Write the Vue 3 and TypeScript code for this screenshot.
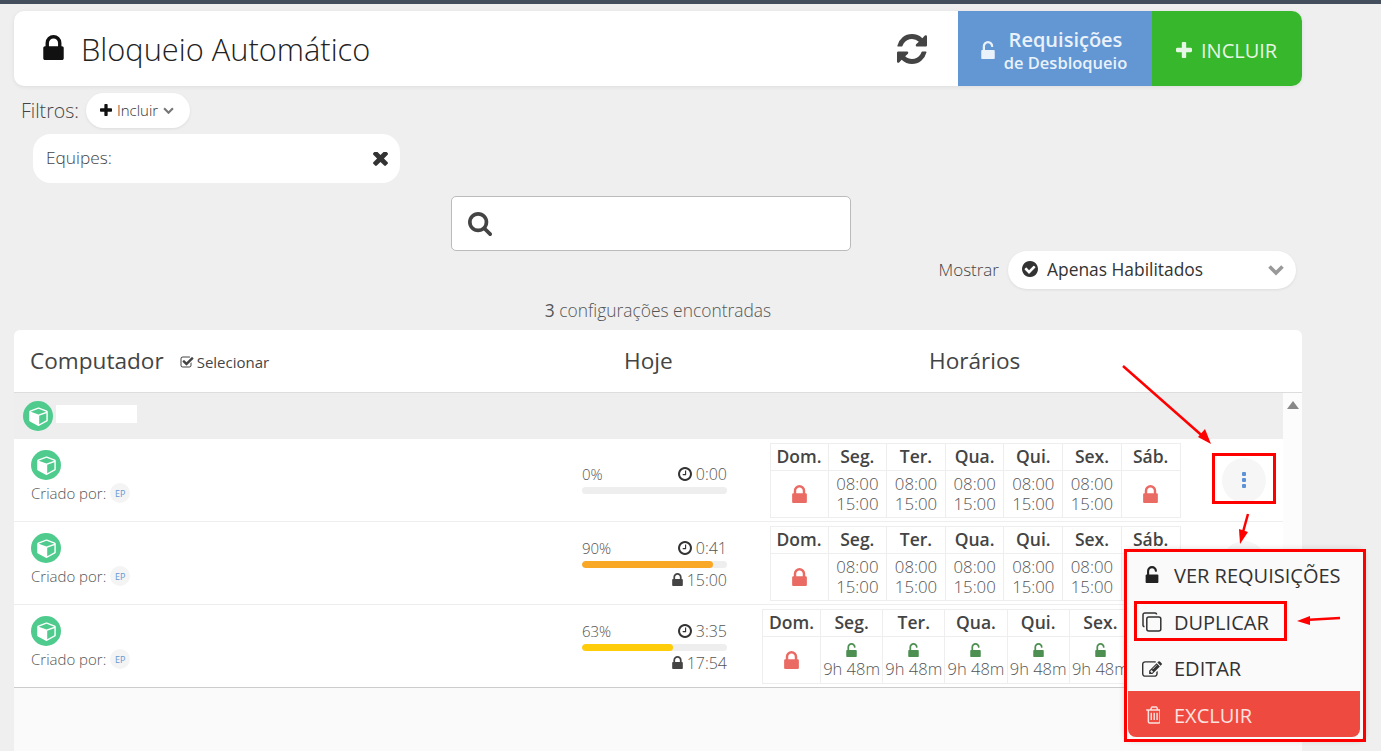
<script setup lang="ts">
interface Cell {
  lock?: boolean
  open?: string
  from?: string
  to?: string
}
interface Row {
  pct: number
  color: string
  clock: string
  until?: string
  wide?: boolean
  cells: Cell[]
}

const days = ['Dom.', 'Seg.', 'Ter.', 'Qua.', 'Qui.', 'Sex.', 'Sáb.']
const work: Cell = { from: '08:00', to: '15:00' }
const open: Cell = { open: '9h 48m' }
const lock: Cell = { lock: true }

const rows: Row[] = [
  { pct: 0, color: '#eee', clock: '0:00', cells: [lock, work, work, work, work, work, lock] },
  { pct: 90, color: '#f9a825', clock: '0:41', until: '15:00', cells: [lock, work, work, work, work, work, lock] },
  { pct: 63, color: '#ffcc0a', clock: '3:35', until: '17:54', wide: true, cells: [lock, open, open, open, open, open, lock] },
]

const lockPath = 'M320 768h512v-192q0-106-75-181t-181-75-181 75-75 181v192zm832 96v576q0 40-28 68t-68 28h-960q-40 0-68-28t-28-68v-576q0-40 28-68t68-28h32v-192q0-184 132-316t316-132 316 132 132 316v192h32q40 0 68 28t28 68z'
const unlockPath = 'M1056 768q40 0 68 28t28 68v576q0 40-28 68t-68 28h-960q-40 0-68-28t-28-68v-576q0-40 28-68t68-28h32v-320q0-185 131.500-316.500t316.500-131.500 316.500 131.500 131.500 316.500q0 26-19 45t-45 19h-64q-26 0-45-19t-19-45q0-106-75-181t-181-75-181 75-75 181v320h736z'
const plusPath = 'M1408 736v192q0 40-28 68t-68 28h-416v416q0 40-28 68t-68 28h-192q-40 0-68-28t-28-68v-416h-416q-40 0-68-28t-28-68v-192q0-40 28-68t68-28h416v-416q0-40 28-68t68-28h192q40 0 68 28t28 68v416h416q40 0 68 28t28 68z'
const cubePath = 'M896 1629l640-349v-636l-640 233v752zm-64-865l698-254-698-254-698 254zm832-252v768q0 35-18 65t-49 47l-704 384q-28 16-61 16t-61-16l-704-384q-31-17-49-47t-18-65v-768q0-40 23-73t61-47l704-256q22-8 44-8t44 8l704 256q38 14 61 47t23 73z'
</script>

<template>
  <div class="page">
    <div class="topbar"></div>

    <header class="title-card">
      <svg class="title-lock" viewBox="0 128 1152 1408"><path :d="lockPath" /></svg>
      <h1>Bloqueio Automático</h1>
      <svg class="refresh" viewBox="0 0 1536 1536">
        <path d="M1511 928q0 5-1 7-64 268-268 434.500T764 1536q-146 0-282.500-55T238 1324l-129 129q-19 19-45 19t-45-19-19-45V960q0-26 19-45t45-19h448q26 0 45 19t19 45-19 45l-137 137q71 66 161 102t187 36q134 0 250-65t186-179q11-17 53-117 8-23 30-23h192q13 0 22.500 9.500T1511 928zm25-800v448q0 26-19 45t-45 19h-448q-26 0-45-19t-19-45 19-45l138-138Q969 256 768 256q-134 0-250 65T332 500q-11 17-53 117-8 23-30 23H50q-13 0-22.500-9.500T18 608v-7q65-268 270-434.500T768 0q146 0 284 55.500T1297 212l130-129q19-19 45-19t45 19 19 45z" />
      </svg>
      <button class="btn-req">
        <svg class="btn-lock" viewBox="0 0 1152 1536"><path :d="unlockPath" /></svg>
        <span class="req-text"><b>Requisições</b><small>de Desbloqueio</small></span>
      </button>
      <button class="btn-add">
        <svg class="plus" viewBox="0 128 1408 1408"><path :d="plusPath" /></svg>
        INCLUIR
      </button>
    </header>

    <div class="filters">
      <span class="filters-label">Filtros:</span>
      <button class="chip">
        <svg class="chip-plus" viewBox="0 128 1408 1408"><path :d="plusPath" /></svg>
        Incluir
        <svg class="chip-arrow" viewBox="0 0 10 6"><path d="M1 1l4 4 4-4" /></svg>
      </button>
    </div>

    <div class="team-pill">
      <span>Equipes:</span>
      <svg class="close" viewBox="110 346 1188 1100">
        <path d="M1298 1214q0 40-28 68l-136 136q-28 28-68 28t-68-28l-294-294-294 294q-28 28-68 28t-68-28l-136-136q-28-28-28-68t28-68l294-294-294-294q-28-28-28-68t28-68l136-136q28-28 68-28t68 28l294 294 294-294q28-28 68-28t68 28l136 136q28 28 28 68t-28 68l-294 294 294 294q28 28 28 68z" />
      </svg>
    </div>

    <div class="search">
      <svg viewBox="64 128 1664 1664">
        <path d="M1216 832q0-185-131.500-316.500t-316.500-131.500-316.500 131.500-131.500 316.500 131.500 316.500 316.500 131.500 316.500-131.500 131.500-316.500zm512 832q0 52-38 90t-90 38q-54 0-90-38l-343-342q-179 124-399 124-143 0-273.500-55.500t-225-150-150-225-55.500-273.500 55.500-273.500 150-225 225-150 273.500-55.500 273.500 55.500 225 150 150 225 55.500 273.500q0 220-124 399l343 343q37 37 37 90z" />
      </svg>
    </div>

    <div class="show-row">
      <span class="show-label">Mostrar</span>
      <div class="show-select">
        <svg class="check" viewBox="0 128 1536 1536">
          <path d="M1284 734q0-28-18-46l-91-90q-19-19-45-19t-45 19l-408 407-226-226q-19-19-45-19t-45 19l-91 90q-18 18-18 46 0 27 18 45l362 362q19 19 45 19 27 0 46-19l543-543q18-18 18-45zm252 162q0 209-103 385.500t-279.500 279.500-385.500 103-385.500-103-279.500-279.500-103-385.500 103-385.500 279.500-279.500 385.500-103 385.500 103 279.500 279.500 103 385.500z" />
        </svg>
        <span>Apenas Habilitados</span>
        <svg class="show-arrow" viewBox="0 0 18 12"><path d="M2.500 2.500L9 9l6.500-6.500" /></svg>
      </div>
    </div>

    <p class="count"><b>3</b> configurações encontradas</p>

    <section class="table-card">
      <div class="table-head">
        <div class="head-name">
          <span class="head-title">Computador</span>
          <span class="select">
            <svg viewBox="0 128 1792 1408">
              <path d="M1472 930v318q0 119-84.500 203.500t-203.500 84.500h-832q-119 0-203.500-84.500t-84.500-203.500v-832q0-119 84.500-203.500t203.500-84.500h832q63 0 117 25 15 7 18 23 3 17-9 29l-49 49q-10 10-23 10-3 0-9-2-23-6-45-6h-832q-66 0-113 47t-47 113v832q0 66 47 113t113 47h832q66 0 113-47t47-113v-254q0-13 9-22l64-64q10-10 23-10 6 0 12 3 20 8 20 29zm231-489l-814 814q-24 24-57 24t-57-24l-430-430q-24-24-24-57t24-57l110-110q24-24 57-24t57 24l263 263 647-647q24-24 57-24t57 24l110 110q24 24 24 57t-24 57z" />
            </svg>
            Selecionar
          </span>
        </div>
        <span class="head-title head-today">Hoje</span>
        <span class="head-title head-hours">Horários</span>
      </div>

      <div class="table-body">
        <div class="rows">
          <div class="group">
            <span class="cube">
              <svg viewBox="0 0 1664 1792"><path :d="cubePath" /></svg>
            </span>
            <span class="masked"></span>
          </div>

          <div v-for="(row, r) in rows" :key="r" class="row">
            <div class="who">
              <span class="cube">
                <svg viewBox="0 0 1664 1792"><path :d="cubePath" /></svg>
              </span>
              <div class="creator">Criado por: <span class="initials">EP</span></div>
            </div>

            <div class="today">
              <div class="today-line">
                <span class="pct">{{ row.pct }}%</span>
                <span class="time">
                  <svg class="clock" viewBox="0 128 1536 1536">
                    <path d="M896 544v448q0 14-9 23t-23 9h-320q-14 0-23-9t-9-23v-64q0-14 9-23t23-9h224v-352q0-14 9-23t23-9h64q14 0 23 9t9 23zm416 352q0-148-73-273t-198-198-273-73-273 73-198 198-73 273 73 273 198 198 273 73 273-73 198-198 73-273zm224 0q0 209-103 385.500t-279.500 279.500-385.500 103-385.500-103-279.500-279.500-103-385.500 103-385.500 279.500-279.500 385.500-103 385.500 103 279.500 279.500 103 385.500z" />
                  </svg>
                  {{ row.clock }}
                </span>
              </div>
              <div class="bar">
                <div class="bar-fill" :style="{ width: row.pct + '%', background: row.color }"></div>
              </div>
              <div v-if="row.until" class="until">
                <svg viewBox="0 128 1152 1408"><path :d="lockPath" /></svg>
                {{ row.until }}
              </div>
            </div>

            <div class="hours">
              <table class="days" :class="{ wide: row.wide }">
                <tbody>
                  <tr>
                    <th v-for="day in days" :key="day">{{ day }}</th>
                  </tr>
                  <tr>
                    <td v-for="(cell, c) in row.cells" :key="c">
                      <svg v-if="cell.lock" class="cell-lock" viewBox="0 128 1152 1408"><path :d="lockPath" /></svg>
                      <template v-else-if="cell.open">
                        <svg class="cell-open" viewBox="0 0 1152 1536"><path :d="unlockPath" /></svg>
                        <div class="open-time">{{ cell.open }}</div>
                      </template>
                      <template v-else>{{ cell.from }}<br />{{ cell.to }}</template>
                    </td>
                  </tr>
                </tbody>
              </table>
            </div>

            <div class="action">
              <button class="dots"><i></i><i></i><i></i></button>
            </div>
          </div>
        </div>

        <div class="scroller">
          <svg viewBox="0 0 14 10"><path d="M7 1l6 8H1z" /></svg>
        </div>
      </div>
      <div class="table-foot"></div>
    </section>

    <!-- menu aberto -->
    <div class="menu">
      <div class="menu-item">
        <span class="menu-icon"><svg class="icon-unlock" viewBox="0 0 1152 1536"><path :d="unlockPath" /></svg></span>
        VER REQUISIÇÕES
      </div>
      <div class="menu-item">
        <span class="menu-icon">
          <svg class="icon-copy" viewBox="0 0 20 20">
            <rect x="4.800" y="5" width="14" height="14" rx="2" />
            <path d="M2.500 14.500h-.2a1.300 1.300 0 0 1-1.300-1.300V2.800a1.800 1.800 0 0 1 1.800-1.800h10.400a1.300 1.300 0 0 1 1.300 1.300v.2" />
          </svg>
        </span>
        DUPLICAR
      </div>
      <div class="menu-item">
        <span class="menu-icon">
          <svg class="icon-edit" viewBox="0 128 1792 1408">
            <path d="M888 1184l116-116-152-152-116 116v56h96v96h56zm440-720q-16-16-33 1l-350 350q-17 17-1 33t33-1l350-350q17-17 1-33zm80 594v190q0 119-84.500 203.500t-203.500 84.500h-832q-119 0-203.500-84.500t-84.500-203.500v-832q0-119 84.500-203.500t203.500-84.500h832q63 0 117 25 15 7 18 23 3 17-9 29l-49 49q-14 14-32 8-23-6-45-6h-832q-66 0-113 47t-47 113v832q0 66 47 113t113 47h832q66 0 113-47t47-113v-126q0-13 9-22l64-64q15-15 35-7t20 29zm-96-738l288 288-672 672h-288v-288zm444 132l-92 92-288-288 92-92q28-28 68-28t68 28l152 152q28 28 28 68t-28 68z" />
          </svg>
        </span>
        EDITAR
      </div>
      <div class="menu-item danger">
        <span class="menu-icon">
          <svg class="icon-trash" viewBox="0 128 1408 1536">
            <path d="M704 736v576q0 14-9 23t-23 9h-64q-14 0-23-9t-9-23v-576q0-14 9-23t23-9h64q14 0 23 9t9 23zm256 0v576q0 14-9 23t-23 9h-64q-14 0-23-9t-9-23v-576q0-14 9-23t23-9h64q14 0 23 9t9 23zm256 0v576q0 14-9 23t-23 9h-64q-14 0-23-9t-9-23v-576q0-14 9-23t23-9h64q14 0 23 9t9 23zm128 724v-948h-896v948q0 22 7 40.500t14.500 27 10.500 8.500h832q3 0 10.500-8.500t14.500-27 7-40.500zm-672-1076h448l-48-117q-7-9-17-11h-317q-10 2-17 11zm928 32v64q0 14-9 23t-23 9h-96v948q0 83-47 143.500t-113 60.500h-832q-66 0-113-58.500t-47-141.500v-952h-96q-14 0-23-9t-9-23v-64q0-14 9-23t23-9h309l70-167q15-37 54-63t79-26h320q40 0 79 26t54 63l70 167h309q14 0 23 9t9 23z" />
          </svg>
        </span>
        EXCLUIR
      </div>
    </div>

    <!-- marcacoes vermelhas do print -->
    <div class="mark mark-dots"></div>
    <div class="mark mark-menu"></div>
    <div class="mark mark-dup"></div>
    <svg class="arrows" viewBox="0 0 1381 751">
      <path d="M1123 366L1207 440" />
      <path class="head" d="M1211 444L1198 437L1205 429Z" />
      <path d="M1248 514L1243 532" />
      <path class="head" d="M1240 544L1239 529L1248 532Z" />
      <path d="M1340 618L1305 620" />
      <path class="head" d="M1297 621L1310 616L1310 625Z" />
    </svg>
  </div>
</template>

<style>
html,
body {
  margin: 0;
  background: #efefef;
}
</style>

<style scoped>
.page {
  position: relative;
  width: 1381px;
  height: 751px;
  overflow: hidden;
  background: #efefef;
  font-family: "Open Sans", "Liberation Sans", sans-serif;
  color: #444;
}

button {
  font-family: inherit;
  border: none;
  cursor: pointer;
}

.topbar {
  height: 4px;
  background: #434f5c;
}

.title-card {
  display: flex;
  align-items: center;
  width: 1288px;
  height: 75px;
  margin: 7px 0 0 14px;
  background: #fff;
  border-radius: 10px;
  box-shadow: 0 1px 4px rgba(0, 0, 0, 0.08);
  overflow: hidden;
}

.title-lock {
  width: 21px;
  height: 25px;
  margin: -2px 0 0 29px;
  fill: #111;
}

h1 {
  flex: 1;
  margin: 0 0 0 17px;
  font-size: 30.800px;
  font-weight: 300;
  color: #222;
}

.refresh {
  width: 30px;
  height: 30px;
  margin-right: 31px;
  fill: #444;
}

.btn-req {
  display: flex;
  align-items: center;
  justify-content: center;
  gap: 9px;
  width: 194px;
  height: 100%;
  padding: 0 2px 0 0;
  background: #6397d3;
  color: #e9f1fa;
}

.btn-lock {
  width: 14px;
  height: 18px;
  margin-top: 2px;
  fill: #e9f1fa;
}

.req-text {
  display: flex;
  flex-direction: column;
  align-items: center;
  padding-top: 2px;
}

.req-text b {
  font-size: 20px;
  font-weight: 600;
  line-height: 26px;
}

.req-text small {
  font-size: 16.500px;
  font-weight: 600;
  line-height: 20px;
}

.btn-add {
  display: flex;
  align-items: center;
  gap: 9px;
  width: 150px;
  height: 100%;
  padding: 3px 0 0 24px;
  background: #37b72b;
  color: #e6f6e4;
  font-size: 20px;
}

.plus {
  width: 16px;
  height: 16px;
  fill: #e6f6e4;
}

.filters {
  display: flex;
  align-items: center;
  gap: 7px;
  height: 35px;
  margin: 7px 0 0 21px;
}

.filters-label {
  font-size: 19.500px;
  font-weight: 300;
}

.chip {
  display: flex;
  align-items: center;
  gap: 5px;
  width: 104px;
  height: 35px;
  padding: 0 0 1px 14px;
  background: #fff;
  border-radius: 18px;
  font-size: 15px;
  font-weight: 300;
  color: #333;
  box-shadow: 0 1px 3px rgba(0, 0, 0, 0.08);
}

.chip-plus {
  width: 12px;
  height: 12px;
  fill: #111;
}

.chip-arrow {
  width: 11px;
  height: 7px;
  fill: none;
  stroke: #777;
  stroke-width: 2;
}

.team-pill {
  display: flex;
  align-items: center;
  justify-content: space-between;
  box-sizing: border-box;
  width: 367px;
  height: 49px;
  margin: 6px 0 0 33px;
  padding: 0 12px 2px 13px;
  background: #fff;
  border-radius: 18px;
  font-size: 17.300px;
  font-weight: 300;
}

.close {
  width: 15px;
  height: 14px;
  margin-top: 2px;
  fill: #333;
}

.search {
  display: flex;
  align-items: center;
  box-sizing: border-box;
  width: 400px;
  height: 55px;
  margin: 13px 0 0 451px;
  padding-left: 16px;
  background: #fff;
  border: 1px solid #bbb;
  border-radius: 5px;
}

.search svg {
  width: 24px;
  height: 24px;
  fill: #444;
}

.show-row {
  display: flex;
  align-items: center;
  justify-content: flex-end;
  gap: 9px;
  width: 1296px;
  height: 38px;
}

.show-label {
  padding-bottom: 2px;
  font-size: 17px;
  font-weight: 300;
}

.show-select {
  display: flex;
  align-items: center;
  box-sizing: border-box;
  width: 288px;
  height: 38px;
  padding: 0 11px 2px 14px;
  background: #fff;
  border-radius: 19px;
  font-size: 17.400px;
  color: #333;
  box-shadow: 0 1px 3px rgba(0, 0, 0, 0.08);
}

.check {
  width: 16px;
  height: 16px;
  margin-right: 9px;
  fill: #333;
}

.show-arrow {
  width: 18px;
  height: 12px;
  margin: 2px 0 0 auto;
  fill: none;
  stroke: #999;
  stroke-width: 3.600;
}

.count {
  width: 1316px;
  margin: 10px 0 0;
  font-size: 17.400px;
  font-weight: 300;
  line-height: 22px;
  text-align: center;
  color: #555;
}

.count b {
  font-weight: 400;
}

.table-card {
  width: 1288px;
  height: 421px;
  margin: 9px 0 0 14px;
  background: #fff;
  border-radius: 6px 6px 0 0;
  overflow: hidden;
}

.table-head {
  display: flex;
  align-items: center;
  height: 62px;
  border-bottom: 1px solid #ddd;
}

.head-name {
  display: flex;
  align-items: center;
  gap: 16px;
  width: 610px;
  padding-left: 16px;
  box-sizing: border-box;
}

.head-title {
  padding-bottom: 2px;
  font-size: 22.600px;
}

.head-today {
  width: 305px;
}

.select {
  display: flex;
  align-items: center;
  gap: 3px;
  padding-top: 1px;
  font-size: 15px;
}

.select svg {
  width: 14px;
  height: 12px;
  fill: #444;
}

.table-body {
  display: flex;
}

.rows {
  width: 1269px;
}

.scroller {
  flex: 1;
  background: #fcfcfc;
  height: 295px;
  text-align: center;
}

.scroller svg {
  display: block;
  width: 14px;
  height: 10px;
  margin: 7px auto 0;
  fill: #888;
}

.group {
  display: flex;
  align-items: center;
  gap: 3px;
  height: 46px;
  padding-left: 9px;
  background: #eee;
}

.cube {
  display: flex;
  align-items: center;
  justify-content: center;
  width: 30px;
  height: 30px;
  border-radius: 50%;
  background: #4ecb8d;
}

.cube svg {
  width: 19px;
  height: 20px;
  fill: #fff;
}

.masked {
  width: 81px;
  height: 18px;
  margin-top: -4px;
  background: #fff;
}

.row {
  display: flex;
  align-items: center;
  box-sizing: border-box;
  height: 83px;
  border-bottom: 1px solid #eee;
}

.row:last-child {
  border-bottom-color: #ccc;
}

.who {
  align-self: flex-start;
  box-sizing: border-box;
  width: 568px;
  margin-top: 11px;
  padding-left: 17px;
}

.creator {
  display: flex;
  align-items: center;
  gap: 4px;
  margin-top: 3px;
  font-size: 15px;
  font-weight: 300;
  color: #555;
}

.initials {
  display: flex;
  align-items: center;
  justify-content: center;
  width: 20px;
  height: 20px;
  border-radius: 50%;
  background: #f4f4f4;
  font-size: 9px;
  font-weight: 400;
  color: #6397d3;
}

.today {
  width: 145px;
  font-weight: 300;
  color: #555;
}

.today-line {
  display: flex;
  align-items: center;
  justify-content: space-between;
  height: 22px;
}

.pct {
  font-size: 15px;
}

.time,
.until {
  display: flex;
  align-items: center;
  justify-content: flex-end;
  gap: 4px;
  font-size: 16px;
}

.clock {
  width: 14px;
  height: 14px;
  fill: #333;
}

.bar {
  height: 7px;
  margin-top: 2px;
  border-radius: 4px;
  background: #eee;
  overflow: hidden;
}

.bar:last-child {
  margin-bottom: 3px;
}

.bar-fill {
  height: 100%;
  border-radius: 4px;
}

.until {
  height: 20px;
  margin-top: 2px;
}

.until svg {
  width: 11px;
  height: 13px;
  fill: #444;
}

.hours {
  display: flex;
  justify-content: center;
  width: 495px;
}

.days {
  table-layout: fixed;
  border-collapse: collapse;
  width: 411px;
  margin-left: 1px;
  text-align: center;
}

.days th:first-child {
  width: 58px;
}

.days.wide {
  width: 428px;
  margin-left: 3px;
}

.days.wide th:last-child {
  width: 58px;
}

.days th,
.days td {
  padding: 0;
  border: 1px solid #eee;
}

.days th {
  height: 27px;
  padding-bottom: 2px;
  box-sizing: border-box;
  font-size: 17.500px;
  font-weight: 600;
  line-height: 20px;
  color: #444;
}

.days td {
  height: 46px;
  font-size: 16.800px;
  font-weight: 300;
  line-height: 20px;
  color: #555;
}

.cell-lock {
  display: block;
  width: 15px;
  height: 18px;
  margin: auto;
  fill: #e96b63;
}

.cell-open {
  display: block;
  width: 11px;
  height: 14px;
  margin: 3px auto 0;
  fill: #4c8f50;
}

.open-time {
  margin-top: 2px;
  font-size: 16.500px;
  white-space: nowrap;
}

.action {
  flex: 1;
  display: flex;
}

.dots {
  display: flex;
  flex-direction: column;
  align-items: center;
  justify-content: center;
  gap: 2px;
  width: 44px;
  height: 45px;
  padding: 0;
  border-radius: 50%;
  background: #f6f6f6;
}

.dots i {
  width: 4px;
  height: 4px;
  border-radius: 1px;
  background: #5b93d6;
}

.menu {
  position: absolute;
  left: 1125px;
  top: 550px;
  box-sizing: border-box;
  width: 239px;
  height: 190px;
  padding-top: 1.500px;
  background: #fafafa;
  border-radius: 6px;
  box-shadow: 0 0 6px rgba(0, 0, 0, 0.2);
  font-size: 20px;
  color: #333;
}

.menu-item {
  display: flex;
  align-items: center;
  gap: 12px;
  box-sizing: border-box;
  height: 46.500px;
  padding: 2px 0 0 17px;
}

.menu-icon {
  display: flex;
  justify-content: center;
  width: 20px;
}

.icon-unlock {
  width: 14px;
  height: 17px;
  margin-top: -3px;
  fill: #222;
}

.icon-copy {
  width: 20px;
  height: 20px;
  fill: none;
  stroke: #333;
  stroke-width: 1.500;
}

.icon-edit {
  width: 20px;
  height: 16px;
  fill: #333;
}

.icon-trash {
  width: 16px;
  height: 18px;
  fill: #fbe2e0;
}

.danger {
  height: 46px;
  margin: 0 4px 0 3px;
  padding-left: 14px;
  background: #ef4a3f;
  border-radius: 0 0 8px 8px;
  color: #fbe2e0;
}

.mark {
  position: absolute;
  box-sizing: border-box;
  border: 3px solid #f00;
}

.mark-dots {
  left: 1212px;
  top: 453px;
  width: 64px;
  height: 51px;
}

.mark-menu {
  left: 1124px;
  top: 549px;
  width: 242px;
  height: 193px;
}

.mark-dup {
  left: 1134px;
  top: 601px;
  width: 153px;
  height: 40px;
}

.arrows {
  position: absolute;
  left: 0;
  top: 0;
  width: 1381px;
  height: 751px;
  fill: none;
  stroke: #f00;
  stroke-width: 2.500;
  pointer-events: none;
}

.arrows .head {
  fill: #f00;
  stroke: none;
}

.table-foot {
  height: 63px;
  background: #fafafa;
}
</style>
